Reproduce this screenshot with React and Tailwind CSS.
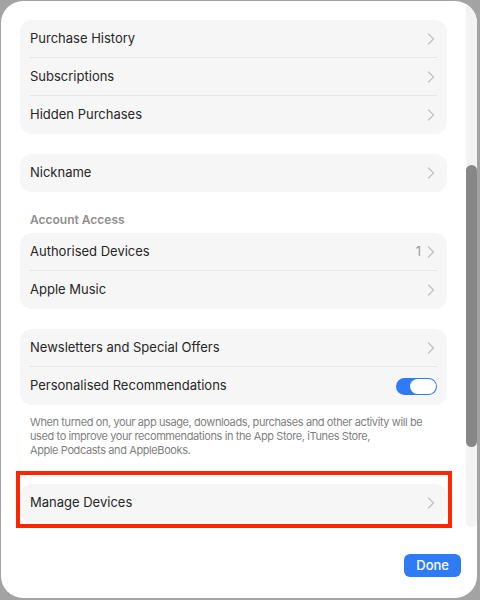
import React from "react";

function Chevron() {
  return (
    <svg width="8" height="12" viewBox="0 0 8 12" fill="none" className="shrink-0">
      <path d="M1.5 1L6.5 6L1.5 11" stroke="#c3c3c3" strokeWidth="1.4" strokeLinecap="round" strokeLinejoin="round" />
    </svg>
  );
}

function Row({ label, value, last, children }) {
  return (
    <div className="px-[10px]">
      <div className={"h-[38px] flex items-center justify-between " + (last ? "" : "border-b border-[#e6e6e6]")}>
        <span className="text-[13px] text-[#262626]">{label}</span>
        {children ? (
          children
        ) : (
          <div className="flex items-center gap-[6px] pr-[2px]">
            {value && <span className="text-[13px] text-[#9a9a9a]">{value}</span>}
            <Chevron />
          </div>
        )}
      </div>
    </div>
  );
}

function Card({ children }) {
  return <div className="bg-[#f6f6f6] rounded-[12px]">{children}</div>;
}

function Toggle() {
  return (
    <div className="w-[41px] h-[17px] rounded-full bg-[#2f7bf6] flex items-center justify-end px-[1px]">
      <div className="w-[26px] h-[15px] rounded-full bg-white" />
    </div>
  );
}

export default function App() {
  return (
    <div
      className="w-[480px] h-[600px] bg-[#a3a3a3] overflow-hidden"
      style={{ fontFamily: "Inter, 'Liberation Sans', sans-serif" }}
    >
      <div className="relative ml-[1px] mt-[1px] w-[476px] h-[597px] bg-white rounded-[22px] flex flex-col overflow-hidden">
        <div className="flex h-[526px]">
          <div className="flex-1 min-w-0 pl-[19px] pr-[19px] pt-[19px] flex flex-col">
            <Card>
              <Row label="Purchase History" />
              <Row label="Subscriptions" />
              <Row label="Hidden Purchases" last />
            </Card>
            <div className="mt-[20px]">
              <Card>
                <Row label="Nickname" last />
              </Card>
            </div>
            <div className="mt-[19px] mb-[4px] pl-[10px] text-[12px] font-semibold text-[#8e8e8e]">Account Access</div>
            <Card>
              <Row label="Authorised Devices" value="1" />
              <Row label="Apple Music" last />
            </Card>
            <div className="mt-[20px]">
              <Card>
                <Row label="Newsletters and Special Offers" />
                <Row label="Personalised Recommendations" last>
                  <Toggle />
                </Row>
              </Card>
            </div>
            <p className="mt-[10px] px-[10px] text-[11px] leading-[14px] text-[#7f7f7f] whitespace-nowrap tracking-[-0.4px]">
              When turned on, your app usage, downloads, purchases and other activity will be
              <br />
              used to improve your recommendations in the App Store, iTunes Store,
              <br />
              Apple Podcasts and AppleBooks.
            </p>
            <div className="mt-[27px]">
              <Card>
                <Row label="Manage Devices" last />
              </Card>
            </div>
          </div>
          <div className="w-[11px] bg-[#f3f3f3] rounded-b-full flex flex-col">
            <div className="mt-[164px] h-[282px] bg-[#878787] rounded-full" />
          </div>
        </div>
        <div className="flex-1 flex justify-end items-start pt-[27px] pr-[16px]">
          <button className="h-[23px] px-[12px] rounded-[6px] bg-[#2f7bf6] text-white text-[13px] font-medium">Done</button>
        </div>
        <div className="absolute left-[15px] top-[470px] w-[436px] h-[57px] border-4 border-[#ff2600]" />
      </div>
    </div>
  );
}
